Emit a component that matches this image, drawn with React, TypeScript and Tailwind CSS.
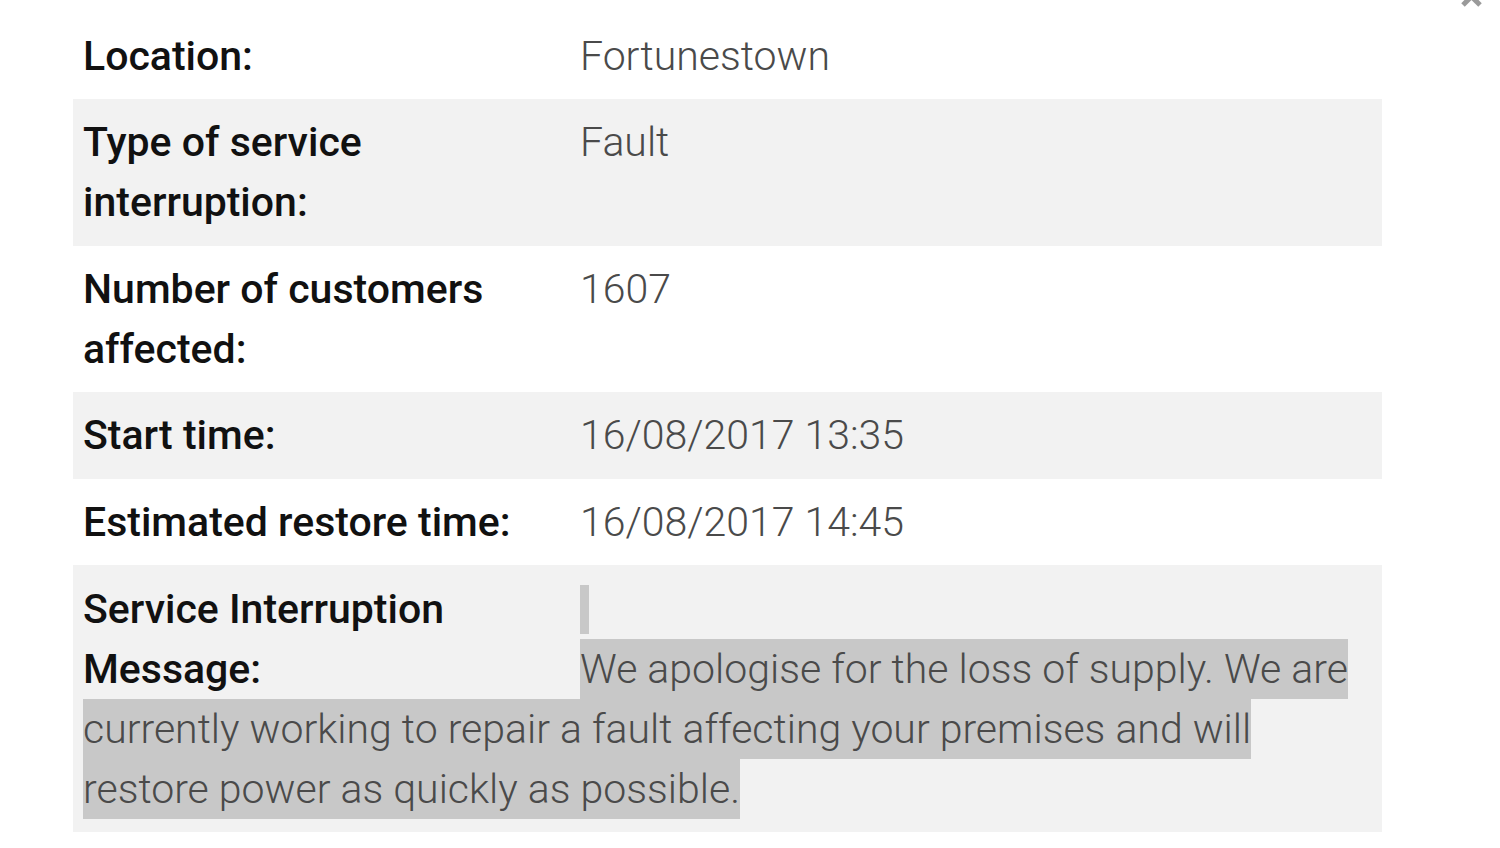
import React from "react";

const rows: { label: string; value: string; shaded: boolean }[] = [
  { label: "Location:", value: "Fortunestown", shaded: false },
  { label: "Type of service interruption:", value: "Fault", shaded: true },
  { label: "Number of customers affected:", value: "1607", shaded: false },
  { label: "Start time:", value: "16/08/2017 13:35", shaded: true },
  { label: "Estimated restore time:", value: "16/08/2017 14:45", shaded: false },
];

export default function App() {
  return (
    <div className="relative w-[1500px] h-[848px] overflow-hidden bg-white font-['Roboto','Liberation_Sans',sans-serif]">
      <svg
        className="absolute left-[1455px] top-[-20px]"
        width="35"
        height="30"
        viewBox="0 0 35 30"
        fill="none"
        stroke="#9a9a9a"
        strokeWidth="5"
      >
        <line x1="8" y1="25" x2="25" y2="8" />
        <line x1="25" y1="25" x2="8" y2="8" />
      </svg>

      <div className="ml-[73px] mt-[12.5px] w-[1309px] text-[41px] leading-[60px]">
        {rows.map((r) => (
          <div
            key={r.label}
            className={`flex px-[10px] py-[13.25px] ${r.shaded ? "bg-[#f2f2f2]" : "bg-white"}`}
          >
            <div className="w-[460px] mr-[37px] font-medium text-[#111111]">{r.label}</div>
            <div className="flex-1 font-light text-[#4a4a4a]">{r.value}</div>
          </div>
        ))}
        <div className="px-[10px] py-[13.5px] bg-[#f2f2f2] flow-root">
          <div className="float-left w-[460px] mr-[37px] font-medium text-[#111111]">
            Service Interruption Message:
          </div>
          <span className="font-light text-[#4a4a4a]">
            <span className="inline-block align-top w-[9px] h-[49px] mt-[6px] bg-[#c8c8c8]" />
            <br />
            <span className="bg-[#c8c8c8] py-[6px] box-decoration-clone">
              We apologise for the loss of supply. We are
              <br />
              currently working to repair a fault affecting your premises and will
              <br />
              restore power as quickly as possible.
            </span>
          </span>
        </div>
      </div>
    </div>
  );
}
